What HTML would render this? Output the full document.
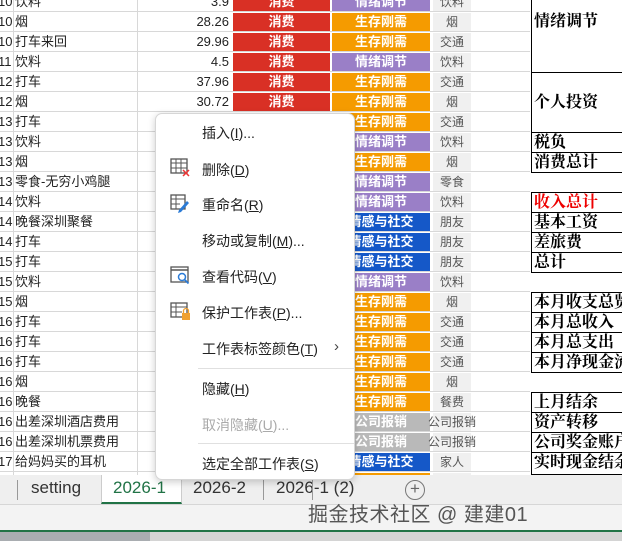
<!DOCTYPE html><html><head><meta charset="utf-8"><style>
*{margin:0;padding:0;box-sizing:border-box}
body{width:622px;height:541px;overflow:hidden;background:#fff;font-family:"Liberation Sans","Noto Sans CJK SC",sans-serif;position:relative}
.r{position:absolute;left:0;width:530px;height:20px;border-bottom:1px solid #d8d8d8;font-size:13px;color:#222}
.r span{position:absolute;top:2px;line-height:16px;white-space:nowrap}
.a{left:-2px}.b{left:15px}.n{right:301px}
.c1{position:absolute;left:233px;width:97px;top:1px;height:18px;background:#d93025;color:#fff;font-weight:bold;text-align:center;line-height:18px;font-size:13px}
.c2{position:absolute;left:332px;width:98px;top:1px;height:18px;color:#fff;font-weight:bold;text-align:center;line-height:18px;font-size:13px}
.c3{position:absolute;left:433px;width:38px;top:1px;height:18px;background:#f0f0f0;color:#555;line-height:18px;font-size:12px;display:flex;justify-content:center;white-space:nowrap}
.o{background:#f59b00}.p{background:#9a7fc7}.bl{background:#1558c8}.g{background:#b9b9b9}
.vl{position:absolute;top:0;width:1px;height:475px;background:#d8d8d8}
.h{position:absolute;left:531px;width:95px;border:1px solid #000;border-right:none;font-family:"Liberation Serif","Noto Serif CJK SC",serif;font-weight:bold;font-size:16px;line-height:19px;padding-left:2px;background:#fff;white-space:nowrap;overflow:hidden}
.menu{position:absolute;left:155px;top:113px;width:200px;height:367px;background:#fff;border:1px solid #d6d6d6;border-radius:7px;box-shadow:0 2px 8px rgba(0,0,0,.2)}
.mi{position:absolute;left:46px;font-size:14px;color:#222;line-height:18px}
.mi u{text-decoration:underline}
.sep{position:absolute;left:42px;right:0;height:1px;background:#e0e0e0}
.ic{position:absolute;left:14px}
</style></head><body>
<div class="vl" style="left:13px"></div><div class="vl" style="left:137px"></div>
<div id="rows"></div>
<script>
const d=[["10","饮料","3.9","p","情绪调节","饮料"],["10","烟","28.26","o","生存刚需","烟"],["10","打车来回","29.96","o","生存刚需","交通"],["11","饮料","4.5","p","情绪调节","饮料"],["12","打车","37.96","o","生存刚需","交通"],["12","烟","30.72","o","生存刚需","烟"],["13","打车","","o","生存刚需","交通"],["13","饮料","","p","情绪调节","饮料"],["13","烟","","o","生存刚需","烟"],["13","零食-无穷小鸡腿","","p","情绪调节","零食"],["14","饮料","","p","情绪调节","饮料"],["14","晚餐深圳聚餐","","bl","情感与社交","朋友"],["14","打车","","bl","情感与社交","朋友"],["15","打车","","bl","情感与社交","朋友"],["15","饮料","","p","情绪调节","饮料"],["15","烟","","o","生存刚需","烟"],["16","打车","","o","生存刚需","交通"],["16","打车","","o","生存刚需","交通"],["16","打车","","o","生存刚需","交通"],["16","烟","","o","生存刚需","烟"],["16","晚餐","","o","生存刚需","餐费"],["16","出差深圳酒店费用","","g","公司报销","公司报销"],["16","出差深圳机票费用","","g","公司报销","公司报销"],["17","给妈妈买的耳机","","bl","情感与社交","家人"],["","","","o","",""]];
let h="";d.forEach((r,i)=>{h+=`<div class="r" style="top:${-8+20*i}px"><span class="a">${r[0]}</span><span class="b">${r[1]}</span><span class="n">${r[2]}</span><div class="c1">消费</div><div class="c2 ${r[3]}">${r[4]}</div><div class="c3">${r[5]}</div></div>`});
document.getElementById("rows").innerHTML=h;
</script>
<div class="h" style="top:-8px;height:81px;padding-top:19px">情绪调节</div>
<div class="h" style="top:72px;height:61px;padding-top:20px">个人投资</div>
<div class="h" style="top:132px;height:21px">税负</div>
<div class="h" style="top:152px;height:21px">消费总计</div>
<div class="h" style="top:192px;height:21px;color:#e00">收入总计</div>
<div class="h" style="top:212px;height:21px">基本工资</div>
<div class="h" style="top:232px;height:21px">差旅费</div>
<div class="h" style="top:252px;height:21px">总计</div>
<div class="h" style="top:292px;height:21px">本月收支总览</div>
<div class="h" style="top:312px;height:21px">本月总收入</div>
<div class="h" style="top:332px;height:21px">本月总支出</div>
<div class="h" style="top:352px;height:21px">本月净现金流</div>
<div class="h" style="top:392px;height:21px">上月结余</div>
<div class="h" style="top:412px;height:21px">资产转移</div>
<div class="h" style="top:432px;height:21px">公司奖金账户</div>
<div class="h" style="top:452px;height:23px">实时现金结余</div>

<div style="position:absolute;left:0;top:475px;width:622px;height:30px;background:#efefef;border-bottom:1px solid #d6d6d6"></div>
<div style="position:absolute;left:17px;top:480px;width:1px;height:20px;background:#999"></div>
<div style="position:absolute;left:31px;top:478px;font-size:17px;color:#333">setting</div>
<div style="position:absolute;left:101px;top:475px;width:81px;height:29px;background:#fff;border-bottom:2px solid #217346;border-left:1px solid #ccc;border-right:1px solid #ccc"></div>
<div style="position:absolute;left:113px;top:478px;font-size:17px;color:#217346">2026-1</div>
<div style="position:absolute;left:193px;top:478px;font-size:17px;color:#333">2026-2</div>
<div style="position:absolute;left:263px;top:480px;width:1px;height:20px;background:#999"></div>
<div style="position:absolute;left:276px;top:478px;font-size:17px;color:#333">2026-1 (2)</div>
<div style="position:absolute;left:312px;top:480px;width:1px;height:20px;background:#999"></div>
<div style="position:absolute;left:405px;top:480px;width:20px;height:20px;border:1.5px solid #777;border-radius:50%;text-align:center;line-height:16px;font-size:17px;color:#666">+</div>
<div style="position:absolute;left:0;top:505px;width:622px;height:26px;background:#f3f3f3"></div>
<div style="position:absolute;left:308px;top:498px;font-size:20px;color:#555;letter-spacing:0.5px">掘金技术社区 @ 建建01</div>
<div style="position:absolute;left:0;top:530px;width:622px;height:2px;background:#217346"></div>
<div style="position:absolute;left:0;top:532px;width:150px;height:9px;background:#a9adb1"></div>
<div style="position:absolute;left:150px;top:532px;width:472px;height:9px;background:#d4d4d4"></div>

<div class="menu">
<div class="mi" style="top:10px">插入(<u>I</u>)...</div>
<svg class="ic" style="top:44px" width="22" height="20" viewBox="0 0 22 20"><rect x="1" y="1" width="16" height="14" fill="none" stroke="#555" stroke-width="1.3"/><path d="M1 5H17M1 10H17M6 1V15M11 1V15" stroke="#555" stroke-width="1"/><path d="M13 12l6 6M19 12l-6 6" stroke="#e33" stroke-width="1.5"/></svg>
<div class="mi" style="top:47px">删除(<u>D</u>)</div>
<svg class="ic" style="top:80px" width="22" height="20" viewBox="0 0 22 20"><rect x="1" y="1" width="14" height="14" fill="none" stroke="#555" stroke-width="1.3"/><path d="M1 5H15M6 1V15M1 10H10" stroke="#555" stroke-width="1"/><path d="M9 16l8-9 2 2-8 9-3 1z" fill="#2b7bd6"/></svg>
<div class="mi" style="top:82px">重命名(<u>R</u>)</div>
<div class="mi" style="top:118px">移动或复制(<u>M</u>)...</div>
<svg class="ic" style="top:152px" width="22" height="20" viewBox="0 0 22 20"><rect x="1" y="1" width="17" height="15" fill="none" stroke="#555" stroke-width="1.3"/><path d="M1 4H18" stroke="#555" stroke-width="1.5"/><circle cx="12" cy="11" r="3.5" fill="none" stroke="#2b7bd6" stroke-width="1.5"/><path d="M14.5 13.5l4 4" stroke="#2b7bd6" stroke-width="1.8"/></svg>
<div class="mi" style="top:154px">查看代码(<u>V</u>)</div>
<svg class="ic" style="top:188px" width="22" height="20" viewBox="0 0 22 20"><rect x="1" y="1" width="16" height="14" fill="none" stroke="#555" stroke-width="1.3"/><path d="M1 5H17M1 10H12M6 1V15" stroke="#555" stroke-width="1"/><rect x="12" y="11" width="8" height="7" fill="#f0a030"/><path d="M13.5 11V9a2.5 2.5 0 0 1 5 0v2" fill="none" stroke="#f0a030" stroke-width="1.3"/></svg>
<div class="mi" style="top:190px">保护工作表(<u>P</u>)...</div>
<div class="mi" style="top:226px">工作表标签颜色(<u>T</u>)</div>
<div style="position:absolute;left:178px;top:224px;font-size:15px;color:#444">&#x203A;</div>
<div class="sep" style="top:254px"></div>
<div class="mi" style="top:266px">隐藏(<u>H</u>)</div>
<div class="mi" style="top:302px;color:#aaa">取消隐藏(<u>U</u>)...</div>
<div class="sep" style="top:329px"></div>
<div class="mi" style="top:341px">选定全部工作表(<u>S</u>)</div>
</div>
</body></html>
